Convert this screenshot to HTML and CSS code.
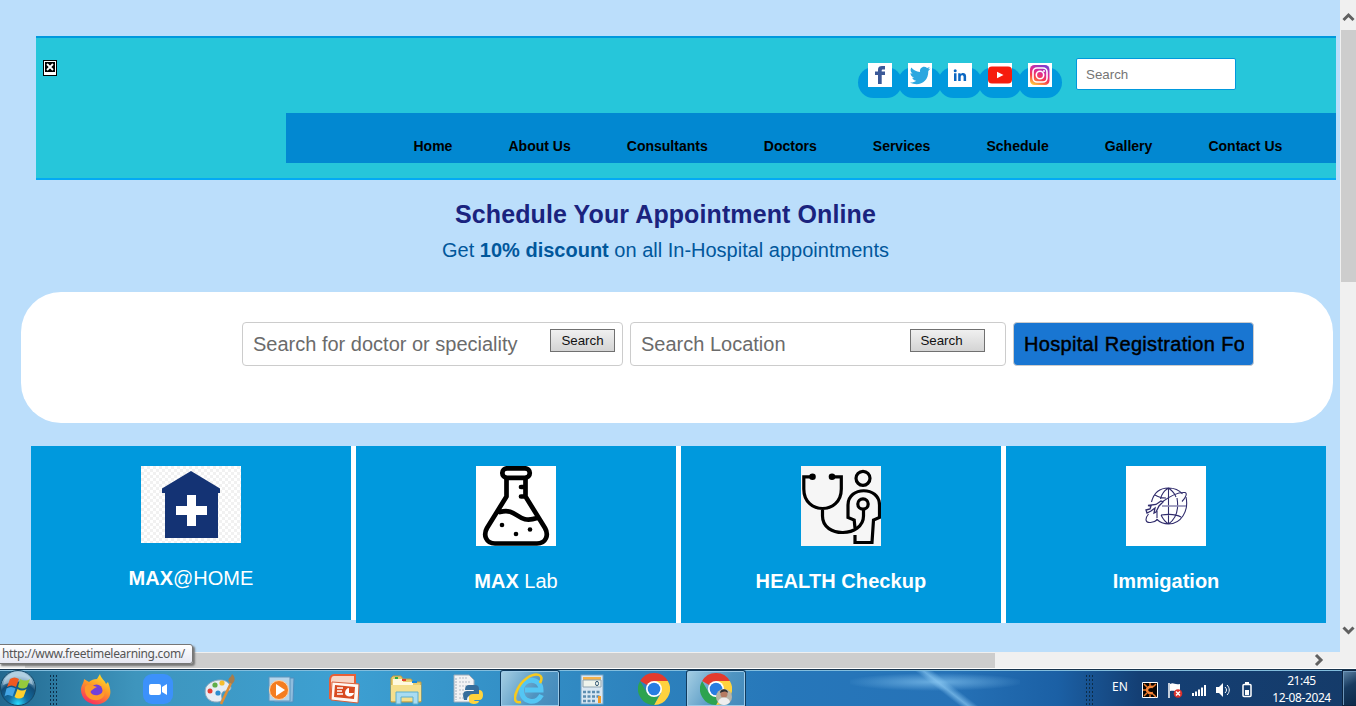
FILE: index.html
```html
<!DOCTYPE html>
<html lang="en">
<head>
<meta charset="utf-8">
<title>Hospital Appointments</title>
<link rel="stylesheet" href="styles.css">
</head>
<body>
<div class="viewport">
  <main class="page">
    <header class="header">
      <div class="logo"><svg width="14" height="16" viewBox="0 0 14 16"><path fill="#000" d="M0 0h14v16H0z"/><path fill="#fff" d="M1 1h12v14H1z"/><path fill="#000" d="M2 2h10v10H2z"/><path d="M4 4l6 6M10 4l-6 6" stroke="#fff" stroke-width="1.800"/></svg></div>
      <div class="header-main">
        <div class="topbar">
          <div class="social">
            <a class="pill"><svg class="tile" viewBox="0 0 24 24"><path fill="#fff" d="M0 0h24v24H0z"/><path fill="#3b5998" d="M10 21v-9H7V8.400h3V6.500C10 4 11.500 3 14 3h3v3.500h-2c-1 0-1.300.5-1.300 1.300v.6H17v3.600h-3.300v9z"/></svg></a>
            <a class="pill"><svg class="tile" viewBox="0 0 24 24"><path fill="#fff" d="M0 0h24v24H0z"/><path fill="#2ca7e0" d="M22.500 5.500l-2.300.7 1.600-2.300-2.700 1c-3.300-3-8 0-7 4C8 8.700 5.500 7 3.300 4.500 2 7 2.500 9 4.500 10.700l-2-.6c0 2.400 1.500 4 3.700 4.600l-2 .1c.7 1.800 2 2.800 4.100 3-1.800 1.300-4 1.900-6.300 1.700 8.500 4.500 18.500 0 18.300-11.500z"/></svg></a>
            <a class="pill"><svg class="tile" viewBox="0 0 24 24"><path fill="#fff" d="M0 0h24v24H0z"/><g fill="#0a66c2"><circle cx="7.200" cy="7.700" r="1.500"/><path d="M6 10.200h2.500V18H6zM10.200 10.200h2.400v1.100c1.500-2.200 5.500-1.600 5.500 2V18h-2.500v-4c0-2.500-2.900-2.300-2.900 0v4h-2.500z"/></g></svg></a>
            <a class="pill"><svg class="tile" viewBox="0 0 24 24"><path fill="#fff" d="M0 0h24v24H0z"/><rect y="3.500" width="24" height="17" rx="4" fill="#f61c0d"/><path fill="#fff" d="M9 8.800l6.500 3.200L9 15.300z"/></svg></a>
            <a class="pill"><svg class="tile" viewBox="0 0 24 24"><defs><linearGradient id="insta" x1=".7" y1="0" x2=".25" y2="1"><stop stop-color="#7c3fd0"/><stop offset=".35" stop-color="#d92b9a"/><stop offset=".65" stop-color="#fa3c4c"/><stop offset="1" stop-color="#ffc43d"/></linearGradient></defs><path fill="#fff" d="M0 0h24v24H0z"/><rect x="2" y="2" width="19.500" height="20" rx="4.500" fill="url(#insta)"/><g fill="none" stroke="#fff" stroke-width="1.600"><rect x="5" y="5" width="14" height="14" rx="4"/><circle cx="12" cy="12" r="3.700"/></g><circle cx="16" cy="8" r="1" fill="#fff"/></svg></a>
          </div>
          <div class="top-search">Search</div>
        </div>
        <nav class="nav"><a>Home</a><a>About Us</a><a>Consultants</a><a>Doctors</a><a>Services</a><a>Schedule</a><a>Gallery</a><a>Contact Us</a></nav>
      </div>
    </header>

    <section class="intro">
      <h1>Schedule Your Appointment Online</h1>
      <p>Get <b>10% discount</b> on all In-Hospital appointments</p>
    </section>

    <section class="search-panel">
      <div class="field doctor"><span>Search for doctor or speciality</span><button>Search</button></div>
      <div class="field location"><span>Search Location</span><button>Search</button></div>
      <div class="field register"><span>Hospital Registration Fo</span></div>
    </section>

    <section class="cards">
      <article class="card card-home">
        <svg width="100" height="77" viewBox="0 0 100 77"><defs><pattern id="check" width="6" height="6" patternUnits="userSpaceOnUse"><path fill="#fff" d="M0 0h6v6H0z"/><path fill="#f1f1f1" d="M0 0h3v3H0zM3 3h3v3H3z"/></pattern></defs><path fill="url(#check)" d="M0 0h100v77H0z"/><path fill="#143374" d="M50 5l29 17.500V27h-2v45H24V27h-3v-4.500z"/><path fill="#fff" d="M46 29h9v11h11v9H55v11h-9V49H35v-9h11z"/></svg>
        <h2><b>MAX</b>@HOME</h2>
      </article>
      <article class="card">
        <svg width="80" height="80" viewBox="0 0 80 80"><path fill="#fff" d="M0 0h80v80H0z"/><g fill="none" stroke="#000" stroke-width="4.700" stroke-linecap="round" stroke-linejoin="round"><rect x="26.300" y="2.300" width="27.500" height="9.500" rx="4.700"/><path d="M30.500 12v18.500L11 62c-4 7-1 15.500 8 15.500h42c9 0 12-8.500 8-15.500L49.500 30.500V12M45 21h4M45 30.500h4M24 46c18-5 17 13 37 6"/></g><circle cx="26" cy="59" r="2.300"/><circle cx="40" cy="68" r="2.300"/><circle cx="54" cy="63.500" r="2.300"/></svg>
        <h2><b>MAX</b> Lab</h2>
      </article>
      <article class="card">
        <svg width="80" height="80" viewBox="0 0 80 80"><path fill="#f6f6f6" d="M0 0h80v80H0z"/><g fill="none" stroke="#000" stroke-width="3.200"><path d="M11 10.800H2.800V23c0 26 37.500 26 37.500 0V10.800H31M21.500 43v7c0 23 41 21 41 0v-7"/><circle cx="62" cy="12.300" r="7"/><circle cx="62" cy="38" r="5.200"/><path d="M54 62l-.8-8-6.200-2.500V39c0-19 31.500-19 31.500 0v12.500L72.500 54 71 76.500H54V69"/></g><circle cx="11.500" cy="10.800" r="3.300"/><circle cx="31" cy="10.800" r="3.300"/></svg>
        <h2 class="wide"><b>HEALTH Checkup</b></h2>
      </article>
      <article class="card">
        <svg width="80" height="80" viewBox="0 0 80 80"><path fill="#fff" d="M0 0h80v80H0z"/><g fill="none" stroke="#302c6c" stroke-width="1.100"><path d="M25.500 36C28 26 35 22 42.500 22c6 0 11 2.500 14 6M60 31c3 14-5 27-17.500 27-5 0-9-2-12-5M42.500 22v36M42.500 22c-5 3-7 6-8 11M35 49c2 4 4 7 7.500 9M42.500 22c4 3 6.500 6 7.500 9M51 32c1.500 9 1.500 19-8.500 26M29 29c3 2 7 3 11 3M35 49c7-1 15-1 20 2"/><path stroke="#8f8cb5" stroke-width="1.600" d="M36 40h24"/><path d="M36 36c8-6 17-10 23-9.500 2.500.5 1 5-3 9M22.500 48c-4 5-3 9 2 8.500 3 0 6-2 7-3M31 45v7"/><path d="M20 44l4-1 1-3-3-.5 8-1 5-3.500 2 1-4 4-3 6-2 1 1-5-4 3-4 2z" stroke-width="1.300"/></g></svg>
        <h2><b>Immigation</b></h2>
      </article>
    </section>
  </main>
  <div class="scroll-v"><svg viewBox="0 0 16 30" width="16" height="30"><path d="M3.500 20L8.500 15l5 5" fill="none" stroke="#606060" stroke-width="3"/></svg><div class="thumb-v"></div><svg class="down" viewBox="0 0 16 30" width="16" height="30"><path d="M3.500 5.500l5 5 5-5" fill="none" stroke="#606060" stroke-width="3"/></svg></div>
  <div class="scroll-h"><div class="thumb-h"></div><svg class="right" viewBox="0 0 12 16" width="12" height="16"><path d="M2 3l5 5-5 5" fill="none" stroke="#606060" stroke-width="3"/></svg></div>
  <div class="status">http://www.freetimelearning.com/</div>
</div>

<footer class="taskbar">
  <div class="start"><svg width="38" height="37" viewBox="0 0 38 37"><defs><radialGradient id="orb" cx=".5" cy=".95" r=".8"><stop stop-color="#25dcff"/><stop offset=".35" stop-color="#126da2"/><stop offset=".75" stop-color="#124d78"/><stop offset="1" stop-color="#8eb8d1"/></radialGradient></defs><circle cx="18" cy="19" r="17.500" fill="url(#orb)" stroke="#154766"/><path d="M3 16C6-2 30-2 33 16c-10-5-19-4-30 0z" fill="#d5e8f3" opacity=".5"/><path fill="#ef5a22" d="M10 10c3-2 6-2 9 0l-3 8c-3-2-6-2-9 0z"/><path fill="#95c93d" d="M20 10c4 2 7 2 10 0l-3 8c-3 2-6 2-9 0z"/><path fill="#43a5e5" d="M6.500 19.500c3-2 6-2 9 0l-3 8c-3-2-6-2-8 0z"/><path fill="#ffd02e" d="M17.500 20c3 2 6 2 9 0l-3 8c-3 2-6 2-9 0z"/></svg></div>
  <div class="grip"></div>
  <div class="apps">
    <div class="app"><svg viewBox="0 0 32 32"><defs><linearGradient id="fox" x1=".8" y1="0" x2=".3" y2="1"><stop stop-color="#ffe52b"/><stop offset=".45" stop-color="#ff9a27"/><stop offset="1" stop-color="#f82a62"/></linearGradient></defs><path fill="url(#fox)" d="M4 6l5 3c2-2 5-3 8-3l3-5c1 5 5 6 6 10l2-2c3 8 4 14-2 19C16 36 1 29 1 17c0-5 3-7 3-11z"/><circle cx="16.500" cy="17.500" r="6" fill="#7440d8"/><path fill="#ff992a" d="M5 14c4-5 7-1 12 0-3 1-5 3-7 5 4 6 13 3 14-3 3 8-4 12-10 11-7-1-10-7-9-13z"/></svg></div>
    <div class="app"><svg viewBox="0 0 32 32"><rect x="1" y="1" width="30" height="30" rx="9" fill="#3c91fb"/><rect x="7" y="11" width="12" height="11" rx="2" fill="#fff"/><path fill="#fff" d="M20 14l5-3v11l-5-3z"/></svg></div>
    <div class="app"><svg viewBox="0 0 32 32"><path fill="#e7edf4" stroke="#91a9bd" d="M2 14C8 5 25 4 27 15c-1 5-7 1-9 5s3 8-4 9C4 30-1 22 2 14z"/><circle cx="6" cy="18" r="2.500" fill="#e43f35"/><circle cx="11" cy="12" r="2.600" fill="#60ad49"/><circle cx="18" cy="10" r="2.600" fill="#f5bd2d"/><circle cx="14" cy="20" r="2.600" fill="#2d8ed0"/><path d="M17 31L27 10" stroke="#e08d35" stroke-width="2.600"/><path fill="#a77c4c" d="M25 9c-2-4 2-4 3-8 3 2 4 7 0 10z"/></svg></div>
    <div class="app"><svg viewBox="0 0 32 32"><path fill="#8fbcdd" stroke="#4f8fbf" d="M8 5h20l-1 24H8z"/><path fill="#b5d5eb" stroke="#5c95bd" d="M3 4h21v24H3z"/><circle cx="13" cy="17" r="9.500" fill="#f47d20" stroke="#ffd2a6"/><path fill="#fff" d="M10 11l9 6-9 6z"/></svg></div>
    <div class="app"><svg viewBox="0 0 32 32"><path fill="#f8d5c5" stroke="#e95f36" stroke-width="2" d="M6 2h21v23H2V8q0-6 4-6z"/><path fill="#fff7f2" stroke="#d95f39" d="M4 9l27 2-1 19-27-3z"/><path fill="#d84b21" d="M7 12l20 2-1 12-20-2z"/><path d="M9 15h6M9 18h5M9 21h6" stroke="#fff" stroke-width="1.700"/><path fill="#fff" d="M21 15v5h5c-1 5-9 4-9 0 0-3 2-5 4-5z"/></svg></div>
    <div class="app"><svg viewBox="0 0 32 32"><path fill="#e7cd70" stroke="#bd9b43" d="M1 5l2-2h8l2 3h8l2 3h8v20H1z"/><path fill="#fff9df" d="M3 6h10v3h10v4H3z"/><path fill="#2aa846" d="M5 4h3v2H5z"/><path fill="#e43e2d" d="M12 6h4v2h-4z"/><path fill="#1687db" d="M22 8h5v2h-5z"/><path fill="#f5df8d" d="M1 12h30v16H1z"/><path fill="#a9dcf2" stroke="#5daecc" d="M6 19h22v12h-5v-7H11v7H6z"/></svg></div>
    <div class="app"><svg viewBox="0 0 32 32"><path fill="#f2f3f4" stroke="#9babba" d="M2 2h15l5 5v22H2z"/><path d="M4 5v22M7 5h8M7 9h11M7 13h11M7 17h6M7 21h6M7 25h6" stroke="#b2bcc6" stroke-width="1.200" stroke-dasharray="2 1"/><path fill="#366e9c" d="M17 12h6q4 0 4 4v4q0 3-4 3h-5q-3 0-3 4h-3q-3-9 3-9h7v-1h-9q0-5 4-5z"/><path fill="#ffd43c" d="M27 17q4 0 4 5 0 5-4 5h-5v1h5c0 4-10 4-10 0v-4q0-3 4-3h6z"/></svg></div>
    <div class="app active"><svg viewBox="0 0 32 32"><path d="M27.500 22c-5 10-20 8-20-5C8 4 27 4 27 17H11" fill="none" stroke="#54c6f4" stroke-width="5"/><path d="M7 29C-5 32 3 12 13 5c9-6 18-4 13 5" fill="none" stroke="#f6c91f" stroke-width="2.600"/></svg></div>
    <div class="app"><svg viewBox="0 0 32 32"><rect x="5" y="2" width="22" height="29" fill="#d9e7f2" stroke="#76a4c5"/><path fill="#f5b24b" d="M7 4h18v3H7z"/><path fill="#eff4ec" stroke="#8fa4b0" d="M7 7h18v7H7z"/><ellipse cx="21" cy="10.500" rx="1.500" ry="2.200" fill="none" stroke="#355a77"/><path stroke="#5c8db0" stroke-width="2.500" stroke-dasharray="3 1.500" d="M7 19h18M7 23.500h18M7 28h13"/><path fill="#f39a27" d="M22 23h3v7h-3z"/></svg></div>
    <div class="app"><svg viewBox="0 0 32 32"><path fill="#e33b2e" d="M2.140 8A16 16 0 0 1 29.860 8H16v8z"/><path fill="#ffd23e" d="M29.860 8A16 16 0 0 1 16 32l7-12-7-12z"/><path fill="#2da34f" d="M16 32A16 16 0 0 1 2.140 8l6.900 12L16 24l4.500-1z"/><circle cx="16" cy="16" r="8" fill="#fff"/><circle cx="16" cy="16" r="6.300" fill="#287de1"/></svg></div>
    <div class="app active"><svg viewBox="0 0 32 32"><path fill="#e33b2e" d="M2.140 8A16 16 0 0 1 29.860 8H16v8z"/><path fill="#ffd23e" d="M29.860 8A16 16 0 0 1 16 32l7-12-7-12z"/><path fill="#2da34f" d="M16 32A16 16 0 0 1 2.140 8l6.900 12L16 24l4.500-1z"/><circle cx="16" cy="16" r="8" fill="#fff"/><circle cx="16" cy="16" r="6.300" fill="#287de1"/><circle cx="24" cy="24" r="8" fill="#b9b5a7"/><circle cx="24" cy="21" r="3.500" fill="#b57b62"/><path fill="#292d31" d="M20 20c0-5 8-5 8 0-2-2-5-2-8 0z"/><path fill="#eee" d="M18 29c1-6 11-6 12 0-3 4-9 4-12 0z"/></svg></div>
  </div>
  <div class="tray">
    <div class="grip"></div>
    <span class="lang">EN</span>
    <svg class="icons" width="120" height="20" viewBox="0 0 120 20"><path fill="#080504" stroke="#fff" d="M1.500 2.500h15v15h-15z"/><path d="M3 4l3 3m6 7l3 3M3 16l3-3m6-6l3-3M2 10h3M9 3v3m0 9v2" stroke="#ed792a" stroke-width="1.500"/><path d="M12 7c-8-2-8 8 0 6" fill="none" stroke="#f58336" stroke-width="2.500"/><path d="M28 3v15" stroke="#fff" stroke-width="1.500"/><path fill="#fff" d="M29 4c4-2 4 1 10 0v7c-5 1-6-1-10 0z"/><circle cx="37" cy="13.500" r="4.300" fill="#d9302b"/><path d="M35 11.500l4 4m0-4l-4 4" stroke="#fff" stroke-width="1.500"/><path fill="#fff" d="M51 13h2v3h-2zM54 11.500h2V16h-2zM57 9.500h2V16h-2zM60 7.500h2V16h-2zM63 5h2v11h-2z"/><path fill="#fff" d="M75 7h3l4-4v14l-4-4h-3z"/><path d="M84 7c2 2 2 4 0 6m2-8c3 3 3 7 0 10" fill="none" stroke="#fff"/><rect x="102" y="4.500" width="8" height="12" rx="1" fill="none" stroke="#fff" stroke-width="1.500"/><path fill="#fff" d="M104 2h4v2h-4zM104 10h4v5h-4z"/></svg>
    <div class="clock"><span>21:45</span><span>12-08-2024</span></div>
    <div class="desktop"></div>
  </div>
</footer>
</body>
</html>
```
FILE: styles.css
```css
* { box-sizing: border-box; }
body { margin: 0; width: 1356px; height: 706px; overflow: hidden; display: grid; grid-template-rows: 669px 37px; font-family: "Liberation Sans", Arial, sans-serif; }
.viewport { position: relative; display: grid; grid-template: 652px 17px / 1340px 16px; background: #f0f0f0; }
.page { background: #bbdefb; padding-top: 36px; overflow: hidden; }
.header { margin: 0 4px 0 36px; height: 144px; background: #26c6da; border-top: 2px solid #0099dd; border-bottom: 2px solid #03a9f4; display: grid; grid-template-columns: 250px 1050px; }
.logo { padding: 22px 7px; }
.logo svg { display: block; }
.header-main { display: flex; flex-direction: column; }
.topbar { height: 75px; display: flex; align-items: flex-start; padding: 20px 0 0 572px; }
.social { display: flex; gap: 40px; width: 218px; padding-top: 9px; }
.pill { width: 0; height: 31px; display: flex; flex: none; }
.pill::before { content: ""; flex: none; width: 44px; height: 31px; border-radius: 16px; background: #0099dd; }
.tile { flex: none; width: 24px; height: 24px; margin: -4px 0 0 -34px; z-index: 1; }
.top-search { width: 160px; height: 32px; border: 1px solid #0099dd; border-radius: 2px; background: #fff; padding: 0 9px; font-size: 13.33px; line-height: 31px; color: #757575; }
.nav { height: 50px; background: #0288d1; display: flex; gap: 56.100px; padding: 25px 0 0 127.500px; font-size: 14px; line-height: 17px; font-weight: bold; color: #000; white-space: nowrap; }
.intro { height: 112px; width: 1331px; padding-top: 19px; text-align: center; }
.intro h1 { margin: 0; font-size: 25px; line-height: 30px; letter-spacing: .1px; color: #1a237e; }
.intro p { margin: 9px 0 0; font-size: 20px; line-height: 24px; color: #01579b; }
.search-panel { width: 1312px; height: 131px; margin-left: 21px; border-radius: 40px; background: #fff; display: flex; align-items: flex-start; gap: 7px; padding: 30px 0 0 221px; }
.field { height: 44px; border: 1px solid #ccc; border-radius: 4px; padding: 0 10px; color: #6b6b6b; font-size: 20px; line-height: 42px; white-space: nowrap; overflow: hidden; display: flex; }
.field span { overflow: hidden; flex: 1; }
.field button { flex: none; height: 23px; width: 65px; margin: 6px -3px 0 0; padding: 0; border: 1px solid #707070; border-radius: 0; background: linear-gradient(#f0f0f0, #d4d4d4); font: 13.33px "Liberation Sans", sans-serif; color: #111; }
.doctor { width: 381px; }
.location { width: 376px; }
.location button { width: 75px; margin-right: 10px; padding-right: 12px; }
.register { width: 241px; padding: 0 9px 0 10px; background: #1976d2; color: #000; -webkit-text-stroke: .45px #000; letter-spacing: .32px; }
.cards { display: flex; align-items: flex-start; padding: 23px 0 0 31px; }
.card { flex: none; width: 325px; height: 177px; border-right: 5px solid #fff; background: #0099dd; padding-top: 20px; display: flex; flex-direction: column; align-items: center; color: #fff; }
.card:last-child { width: 320px; border: 0; }
.card-home { height: 174px; }
.card svg { display: block; }
.card h2 { margin: 23px 0 0; font-size: 20px; line-height: 24px; font-weight: normal; }
.card .wide { letter-spacing: .08px; }
.scroll-v { display: flex; flex-direction: column; }
.thumb-v { height: 252px; width: 15px; margin-left: 1px; background: #cdcdcd; }
.down { margin-top: auto; }
.scroll-h { grid-column: 1 / 3; display: flex; align-items: center; justify-content: space-between; padding: 0 30px 0 25px; border-bottom: 1px solid #fff; }
.thumb-h { width: 970px; height: 15px; background: #cdcdcd; }
.status { position: absolute; left: -1px; top: 644px; width: 194px; height: 20px; padding-left: 2px; border: 1px solid #767676; border-radius: 0 3px 3px 0; background: linear-gradient(#fff, #e6e7f2); box-shadow: 2px 2px 2px #777; font: 12px/18px "Noto Sans", sans-serif; letter-spacing: -.32px; color: #555; white-space: nowrap; }
.taskbar { position: relative; display: flex; overflow: hidden; border-top: 1px solid #17334d; box-shadow: inset 0 1px #82bddd; background: radial-gradient(ellipse 90px 9px at 50% 50%, #8ccaf4aa, transparent) 850px -8px / 170px 40px no-repeat, linear-gradient(38deg, transparent 0 48%, #8ccaf4aa 54%, transparent 61%) 890px 0 / 100px 37px no-repeat, linear-gradient(90deg, #22688f, #3e95bd 10%, #3da0d2 25%, #338fc6 38%, #2c80bc 49%, #2677ba 58%, #2672b7 70%, #1b60a5 78%, #143f74 84%, #153b69); }
.start { width: 38px; flex: none; }
.start svg { display: block; margin-top: -1px; }
.grip { width: 9px; height: 31px; margin: 4px 0 0 11px; flex: none; background: radial-gradient(circle, #0d2d48 0 .8px, transparent 1.1px) 0 0 / 3px 4px; }
.apps { display: flex; margin-left: 7px; }
.app { width: 62px; flex: none; display: flex; justify-content: center; padding-top: 3px; }
.app svg { width: 32px; height: 32px; }
.app.active { border: 1px solid #103b5e; border-bottom: 0; border-radius: 3px 3px 0 0; box-shadow: inset 0 0 0 1px #9ccae8; background: linear-gradient(120deg, #a6cfe4, #4f94c1 60%, #4389bb); padding-top: 2px; width: 60px; margin: 0 1px; }
.tray { margin-left: auto; display: flex; color: #fff; font: 12px/16px "Noto Sans", sans-serif; }
.tray .grip { margin-left: 0; }
.lang { width: 29px; margin-left: 18px; padding-top: 9px; }
.icons { margin-top: 10px; }
.clock { width: 80px; display: flex; flex-direction: column; align-items: center; padding: 3px 0 0 1px; line-height: 16.500px; letter-spacing: -.4px; }
.desktop { width: 14px; border: 1px solid #0b2441; border-right: 0; box-shadow: inset 1px 1px #6d96b9; background: linear-gradient(150deg, #5d83a5, #183b60 45%, #0c2949); margin-left: 1px; }
```
